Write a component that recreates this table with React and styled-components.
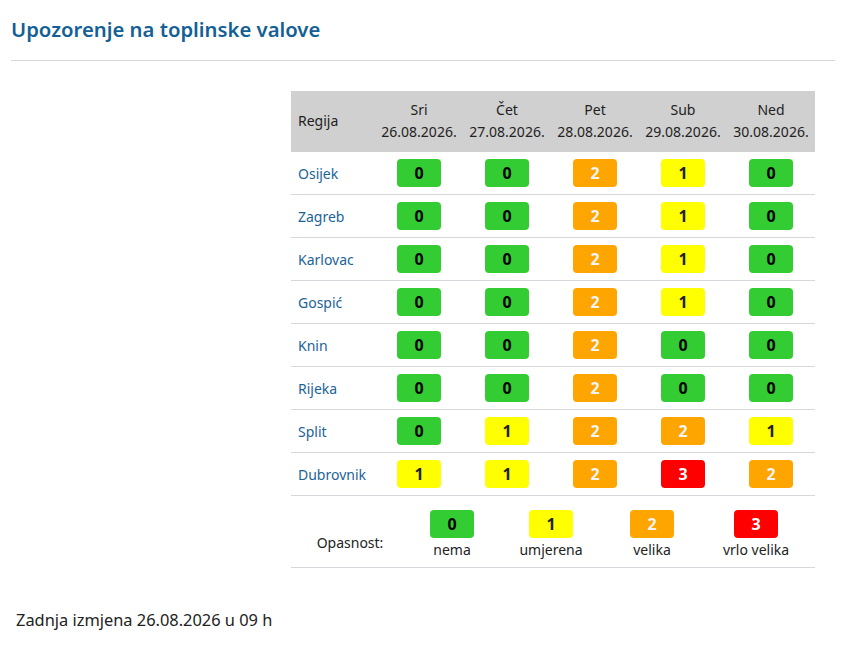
import styled, { createGlobalStyle } from 'styled-components';

const GlobalStyle = createGlobalStyle`
  body {
    margin: 0;
    background: #fff;
    font-family: "Noto Sans", "Open Sans", sans-serif;
    color: #212529;
  }
`;

const dani = [
  { dan: 'Sri', datum: '26.08.2026.' },
  { dan: 'Čet', datum: '27.08.2026.' },
  { dan: 'Pet', datum: '28.08.2026.' },
  { dan: 'Sub', datum: '29.08.2026.' },
  { dan: 'Ned', datum: '30.08.2026.' },
];

const regije = [
  { ime: 'Osijek', razine: [0, 0, 2, 1, 0] },
  { ime: 'Zagreb', razine: [0, 0, 2, 1, 0] },
  { ime: 'Karlovac', razine: [0, 0, 2, 1, 0] },
  { ime: 'Gospić', razine: [0, 0, 2, 1, 0] },
  { ime: 'Knin', razine: [0, 0, 2, 0, 0] },
  { ime: 'Rijeka', razine: [0, 0, 2, 0, 0] },
  { ime: 'Split', razine: [0, 1, 2, 2, 1] },
  { ime: 'Dubrovnik', razine: [1, 1, 2, 3, 2] },
];

const opasnosti = [
  { razina: 0, naziv: 'nema' },
  { razina: 1, naziv: 'umjerena' },
  { razina: 2, naziv: 'velika' },
  { razina: 3, naziv: 'vrlo velika' },
];

const boje = {
  0: { bg: '#33cc33', fg: '#000' },
  1: { bg: '#ffff00', fg: '#222' },
  2: { bg: '#ffa500', fg: '#f4f4f4' },
  3: { bg: '#ff0000', fg: '#fff' },
};

const Stranica = styled.div`
  padding: 0 12px 0 11px;
`;

const Naslov = styled.h2`
  margin: 17px 0 0;
  font-size: 20.3px;
  line-height: 24px;
  font-weight: 600;
  color: #135f96;
`;

const Crta = styled.hr`
  margin: 19px 0 0;
  border: 0;
  border-top: 1px solid #d5d8dc;
`;

const Omotac = styled.div`
  display: flex;
  padding-left: 280px;
  margin-top: 30px;
`;

const Tablica = styled.table`
  width: 524px;
  border-collapse: collapse;
  table-layout: fixed;
  font-size: 14px;
`;

const Zaglavlje = styled.th`
  background: #d0d0d0;
  font-weight: 400;
  line-height: 22px;
  padding: 8px 0 9px;
  text-align: ${(p) => (p.$lijevo ? 'left' : 'center')};
  padding-left: ${(p) => (p.$lijevo ? '7px' : '0')};
  color: #222;
  white-space: nowrap;
`;

const Redak = styled.tr`
  border-bottom: 1px solid #d5d8dc;
`;

const Celija = styled.td`
  padding: 7px 0;
  text-align: center;
  vertical-align: middle;
`;

const Regija = styled.td`
  padding: 7px 0 7px 7px;
  color: #1c6396;
  vertical-align: middle;
`;

const Znacka = styled.span`
  display: inline-flex;
  align-items: center;
  justify-content: center;
  width: 44px;
  height: 28px;
  border-radius: 4px;
  font-size: 16px;
  font-weight: 700;
  background: ${(p) => boje[p.$razina].bg};
  color: ${(p) => boje[p.$razina].fg};
`;

const Legenda = styled.div`
  display: grid;
  grid-template-columns: 118px 86px 112px 90px 118px;
  padding: 14px 0 6px;
  border-bottom: 1px solid #d5d8dc;
  font-size: 14px;
`;

const LegendaNaslov = styled.div`
  display: flex;
  align-items: center;
  justify-content: center;
  padding-top: 14px;
  color: #222;
`;

const LegendaStavka = styled.div`
  display: flex;
  flex-direction: column;
  align-items: center;
  gap: 1px;
  line-height: 22px;
  color: #222;
`;

const Podnozje = styled.p`
  margin: 40px 0 0 5px;
  font-size: 16.4px;
  line-height: 24px;
  color: #222;
`;

export default function App() {
  return (
    <Stranica>
      <GlobalStyle />
      <Naslov>Upozorenje na toplinske valove</Naslov>
      <Crta />
      <Omotac>
        <div>
          <Tablica>
            <colgroup>
              <col style={{ width: 84 }} />
              {dani.map((d) => (
                <col key={d.dan} />
              ))}
            </colgroup>
            <thead>
              <tr>
                <Zaglavlje $lijevo>Regija</Zaglavlje>
                {dani.map((d) => (
                  <Zaglavlje key={d.dan}>
                    {d.dan}
                    <br />
                    {d.datum}
                  </Zaglavlje>
                ))}
              </tr>
            </thead>
            <tbody>
              {regije.map((r) => (
                <Redak key={r.ime}>
                  <Regija>{r.ime}</Regija>
                  {r.razine.map((razina, i) => (
                    <Celija key={i}>
                      <Znacka $razina={razina}>{razina}</Znacka>
                    </Celija>
                  ))}
                </Redak>
              ))}
            </tbody>
          </Tablica>
          <Legenda>
            <LegendaNaslov>Opasnost:</LegendaNaslov>
            {opasnosti.map((o) => (
              <LegendaStavka key={o.razina}>
                <Znacka $razina={o.razina}>{o.razina}</Znacka>
                <span>{o.naziv}</span>
              </LegendaStavka>
            ))}
          </Legenda>
        </div>
      </Omotac>
      <Podnozje>Zadnja izmjena 26.08.2026 u 09 h</Podnozje>
    </Stranica>
  );
}
